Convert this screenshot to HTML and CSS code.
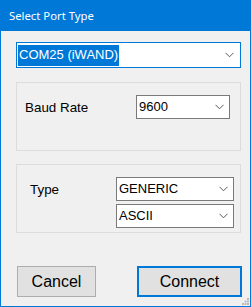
FILE: index.html
```html
<!DOCTYPE html>
<html>
<head>
<meta charset="utf-8">
<link rel="stylesheet" href="styles.css">
</head>
<body>
<div class="window">
  <div class="titlebar">Select Port Type</div>
  <div class="content">
    <div class="combo combo-focus">
      <span class="combo-text"><span class="sel">COM25 (iWAND)</span></span>
      <svg class="chev" width="9" height="6" viewBox="0 0 9 6"><path d="M0.5 0.8 L4.5 4.8 L8.5 0.8" fill="none" stroke="#5a5a5a" stroke-width="1"/></svg>
    </div>
    <div class="group group-baud">
      <div class="label baud-label">Baud Rate</div>
      <div class="combo combo-baud">
        <span class="combo-text">9600</span>
        <svg class="chev" width="9" height="6" viewBox="0 0 9 6"><path d="M0.5 0.8 L4.5 4.8 L8.5 0.8" fill="none" stroke="#5a5a5a" stroke-width="1"/></svg>
      </div>
    </div>
    <div class="group group-type">
      <div class="label type-label">Type</div>
      <div class="stack">
        <div class="combo combo-type">
          <span class="combo-text">GENERIC</span>
          <svg class="chev" width="9" height="6" viewBox="0 0 9 6"><path d="M0.5 0.8 L4.5 4.8 L8.5 0.8" fill="none" stroke="#5a5a5a" stroke-width="1"/></svg>
        </div>
        <div class="combo combo-type">
          <span class="combo-text">ASCII</span>
          <svg class="chev" width="9" height="6" viewBox="0 0 9 6"><path d="M0.5 0.8 L4.5 4.8 L8.5 0.8" fill="none" stroke="#5a5a5a" stroke-width="1"/></svg>
        </div>
      </div>
    </div>
    <div class="buttons">
      <button class="btn btn-cancel">Cancel</button>
      <button class="btn btn-connect">Connect</button>
    </div>
  </div>
  <svg class="grip" width="7" height="7" viewBox="0 0 7 7">
    <rect x="5" y="0" width="2" height="2" fill="#bcbcbc"/>
    <rect x="2.5" y="2.5" width="2" height="2" fill="#bcbcbc"/>
    <rect x="5" y="2.5" width="2" height="2" fill="#bcbcbc"/>
    <rect x="0" y="5" width="2" height="2" fill="#bcbcbc"/>
    <rect x="2.5" y="5" width="2" height="2" fill="#bcbcbc"/>
    <rect x="5" y="5" width="2" height="2" fill="#bcbcbc"/>
  </svg>
</div>
</body>
</html>
```
FILE: styles.css
```css
html, body {
  margin: 0;
  padding: 0;
  background: #f0f0f0;
}
.window {
  position: relative;
  width: 251px;
  height: 307px;
  box-sizing: border-box;
  border: 1px solid #0078d7;
  border-top: 0;
  background: #f0f0f0;
  font-family: "Liberation Sans", Arial, sans-serif;
  color: #000;
}
.titlebar {
  height: 31px;
  margin: 0 -1px;
  background: #0078d7;
  color: #fff;
  font-family: "Noto Sans", "Open Sans", sans-serif;
  font-size: 11.3px;
  display: flex;
  align-items: center;
  padding-left: 9px;
  box-sizing: border-box;
}
.content {
  padding: 11px 9px 0 15px;
  display: flex;
  flex-direction: column;
}
.combo {
  position: relative;
  box-sizing: border-box;
  background: #fff;
  border: 1px solid #7a7a7a;
  height: 24px;
  display: flex;
  align-items: center;
  font-size: 13px;
}
.combo-focus {
  height: 26px;
  border-color: #0078d7;
}
.combo-text {
  padding-left: 2px;
  line-height: 16px;
}
.combo-focus .combo-text {
  padding-left: 1px;
}
.sel {
  display: inline-block;
  background: #0078d7;
  color: #fff;
  padding: 2px 1px 3px 1px;
}
.chev {
  position: absolute;
  right: 5px;
  top: 50%;
  margin-top: -3px;
}
.combo-focus .chev {
  right: 6px;
}
.group {
  box-sizing: border-box;
  border: 1px solid #dcdcdc;
  height: 69px;
  display: flex;
  align-items: flex-start;
}
.group-baud {
  margin-top: 14px;
  padding: 12px 0 0 8px;
}
.group-type {
  margin-top: 13px;
  padding: 12px 0 0 13px;
}
.label {
  font-size: 13.4px;
  height: 24px;
  display: flex;
  align-items: center;
}
.baud-label {
  width: 111px;
}
.type-label {
  width: 86px;
}
.combo-baud {
  width: 94px;
}
.stack {
  display: flex;
  flex-direction: column;
  gap: 3px;
}
.combo-type {
  width: 118px;
}
.buttons {
  margin-top: 33px;
  display: flex;
  justify-content: space-between;
  margin-right: -1px;
  padding-left: 1px;
}
.btn {
  font-family: "Liberation Sans", Arial, sans-serif;
  font-size: 16px;
  color: #000;
  background: #e1e1e1;
  height: 31px;
  box-sizing: border-box;
  padding: 0;
  margin: 0;
}
.btn-cancel {
  width: 79px;
  border: 1px solid #adadad;
}
.btn-connect {
  width: 105px;
  border: 2px solid #0078d7;
}
.grip {
  position: absolute;
  right: 1px;
  bottom: 1px;
}
```
